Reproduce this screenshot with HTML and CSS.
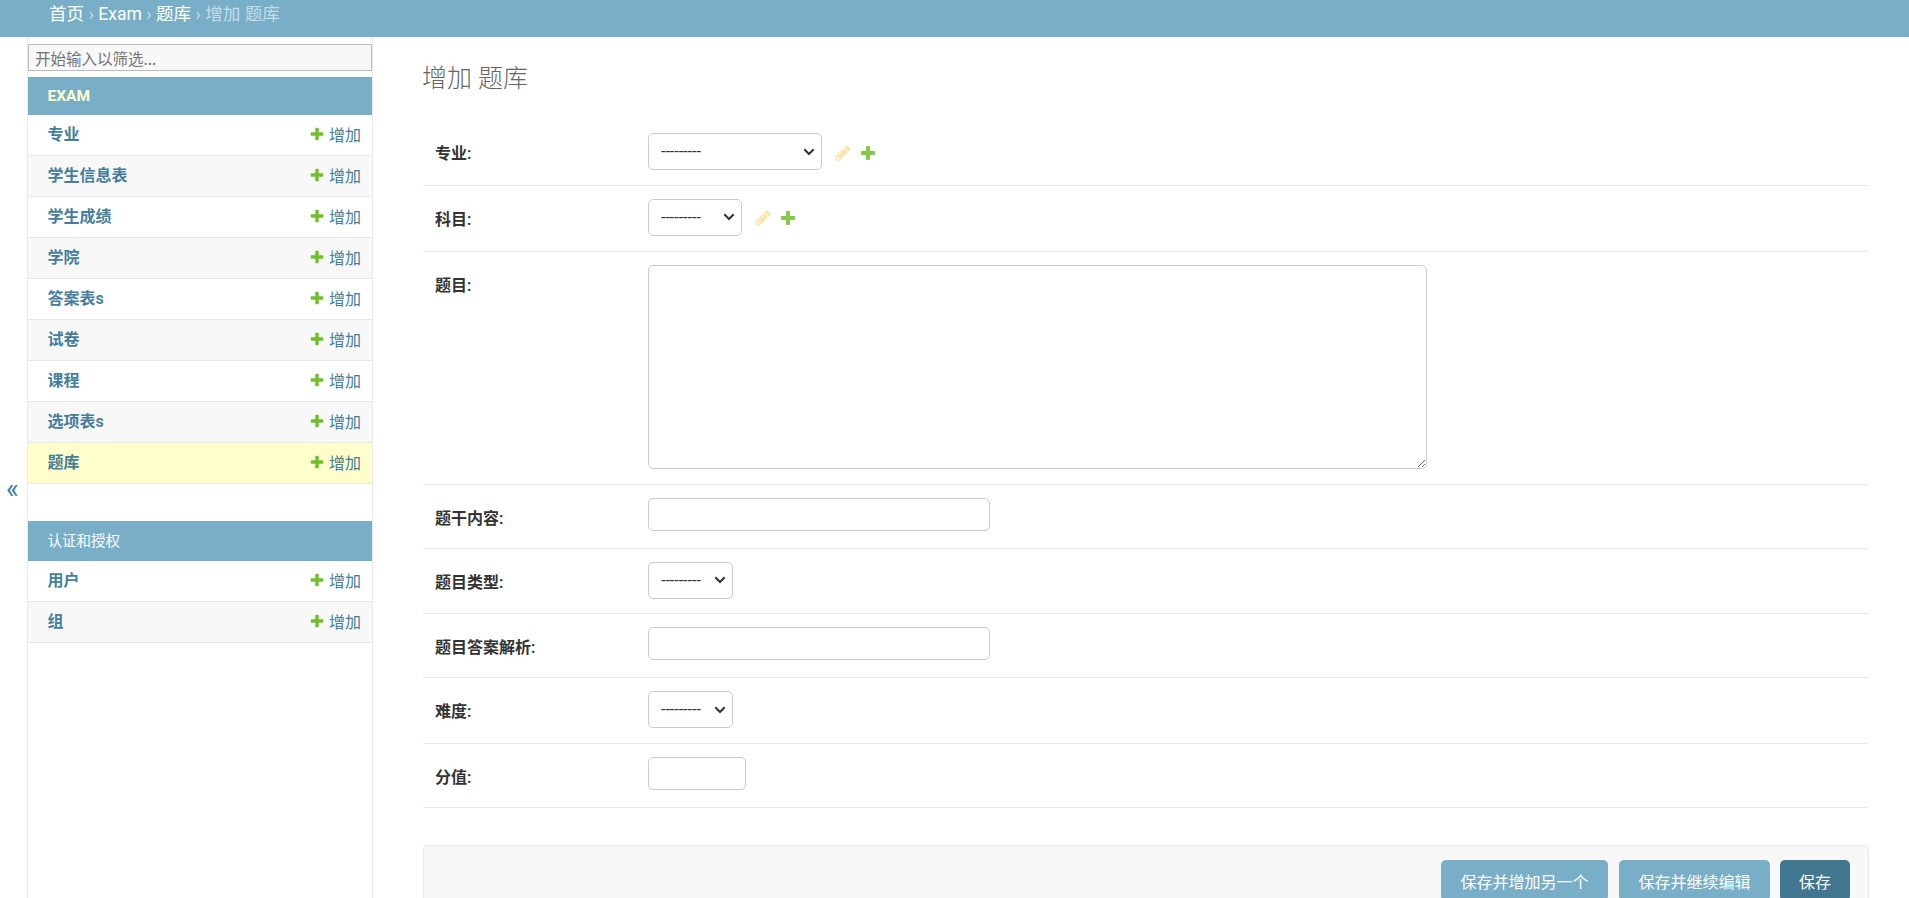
FILE: index.html
```html
<!DOCTYPE html>
<html lang="zh-CN">
<head>
<meta charset="utf-8">
<title>增加 题库</title>
<link rel="stylesheet" href="styles.css">
</head>
<body>
<svg class="sprites" width="0" height="0" aria-hidden="true">
  <symbol id="plus" viewBox="0 0 1792 1792"><path d="M1600 796v192q0 40-28 68t-68 28h-416v416q0 40-28 68t-68 28h-192q-40 0-68-28t-28-68v-416h-416q-40 0-68-28t-28-68v-192q0-40 28-68t68-28h416v-416q0-40 28-68t68-28h192q40 0 68 28t28 68v416h416q40 0 68 28t28 68z"/></symbol>
  <symbol id="pencil" viewBox="0 0 1792 1792"><path d="M491 1536l91-91-235-235-91 91v107h128v128h107zm523-928q0-22-22-22-10 0-17 7l-542 542q-7 7-7 17 0 22 22 22 10 0 17-7l542-542q7-7 7-17zm-54-192l416 416-832 832h-416v-416zm683 96q0 53-37 91l-166 165-416-416 165-164q36-38 91-38 53 0 92 38l235 234q37 39 37 91z"/></symbol>
</svg>
<header class="crumbs"><a href="#">首页</a><span class="sep"> › </span><a href="#">Exam</a><span class="sep"> › </span><a href="#">题库</a><span class="sep"> › </span><span class="current">增加 题库</span></header>
<div class="shell">
  <div class="toggle-col"><button class="toggle" type="button">«</button></div>
  <nav class="sidebar">
    <input class="filter" type="text" placeholder="开始输入以筛选...">
    <section class="app">
      <h2 class="caption caption-strong">EXAM</h2>
      <div class="model"><a class="name" href="#">专业</a><a class="add" href="#"><svg class="plus-icon"><use href="#plus"/></svg>增加</a></div>
      <div class="model"><a class="name" href="#">学生信息表</a><a class="add" href="#"><svg class="plus-icon"><use href="#plus"/></svg>增加</a></div>
      <div class="model"><a class="name" href="#">学生成绩</a><a class="add" href="#"><svg class="plus-icon"><use href="#plus"/></svg>增加</a></div>
      <div class="model"><a class="name" href="#">学院</a><a class="add" href="#"><svg class="plus-icon"><use href="#plus"/></svg>增加</a></div>
      <div class="model"><a class="name" href="#">答案表s</a><a class="add" href="#"><svg class="plus-icon"><use href="#plus"/></svg>增加</a></div>
      <div class="model"><a class="name" href="#">试卷</a><a class="add" href="#"><svg class="plus-icon"><use href="#plus"/></svg>增加</a></div>
      <div class="model"><a class="name" href="#">课程</a><a class="add" href="#"><svg class="plus-icon"><use href="#plus"/></svg>增加</a></div>
      <div class="model"><a class="name" href="#">选项表s</a><a class="add" href="#"><svg class="plus-icon"><use href="#plus"/></svg>增加</a></div>
      <div class="model selected"><a class="name" href="#">题库</a><a class="add" href="#"><svg class="plus-icon"><use href="#plus"/></svg>增加</a></div>
    </section>
    <section class="app app-second">
      <h2 class="caption">认证和授权</h2>
      <div class="model"><a class="name" href="#">用户</a><a class="add" href="#"><svg class="plus-icon"><use href="#plus"/></svg>增加</a></div>
      <div class="model"><a class="name" href="#">组</a><a class="add" href="#"><svg class="plus-icon"><use href="#plus"/></svg>增加</a></div>
    </section>
  </nav>
  <main class="content">
    <h1 class="title">增加 题库</h1>
    <form class="form">
      <div class="row row-select">
        <label class="label">专业:</label>
        <select class="select select-wide"><option>---------</option></select>
        <span class="related"><svg class="rel-icon pencil-icon"><use href="#pencil"/></svg><svg class="rel-icon add-icon"><use href="#plus"/></svg></span>
      </div>
      <div class="row row-select">
        <label class="label">科目:</label>
        <select class="select select-mid"><option>---------</option></select>
        <span class="related"><svg class="rel-icon pencil-icon"><use href="#pencil"/></svg><svg class="rel-icon add-icon"><use href="#plus"/></svg></span>
      </div>
      <div class="row row-area">
        <label class="label">题目:</label>
        <textarea class="area"></textarea>
      </div>
      <div class="row row-input">
        <label class="label">题干内容:</label>
        <input class="input input-wide" type="text">
      </div>
      <div class="row row-select">
        <label class="label">题目类型:</label>
        <select class="select select-narrow"><option>---------</option></select>
      </div>
      <div class="row row-input">
        <label class="label">题目答案解析:</label>
        <input class="input input-wide" type="text">
      </div>
      <div class="row row-select">
        <label class="label">难度:</label>
        <select class="select select-narrow"><option>---------</option></select>
      </div>
      <div class="row row-input">
        <label class="label">分值:</label>
        <input class="input input-small" type="text">
      </div>
      <div class="submit-row">
        <button class="btn btn-a" type="button">保存并增加另一个</button>
        <button class="btn btn-b" type="button">保存并继续编辑</button>
        <button class="btn btn-default" type="button">保存</button>
      </div>
    </form>
  </main>
</div>
</body>
</html>
```

FILE: styles.css
```css
* { box-sizing: border-box; }
html, body { height: 100%; overflow: hidden; }
body {
  margin: 0;
  background: #fff;
  color: #333;
  font-family: Roboto, "Noto Sans CJK SC", sans-serif;
  font-size: 16px;
  display: flex;
  flex-direction: column;
}
a { text-decoration: none; }
.sprites { position: absolute; }

.crumbs {
  flex: none;
  height: 37px;
  padding: 0 49px;
  background: #79aec8;
  color: #c4dce8;
  font-size: 17.6px;
  line-height: 28px;
}
.crumbs a { color: #fff; }
.crumbs .sep { color: #c4dce8; }
.crumbs .current { color: #c4dce8; }

.shell { flex: 1; display: flex; min-height: 0; }
.toggle-col {
  flex: none;
  width: 27px;
  display: flex;
  align-items: center;
  padding-top: 42px;
}
.toggle {
  width: 27px;
  padding: 0 0 0 6px;
  border: 0;
  background: none;
  color: #447e9b;
  font: 27px/30px Roboto, "Noto Sans CJK SC", sans-serif;
  text-align: left;
}

.sidebar {
  flex: none;
  width: 346px;
  border-left: 1px solid #eaeaea;
  border-right: 1px solid #eaeaea;
  padding-top: 7px;
}
.filter {
  display: block;
  width: 100%;
  height: 27px;
  margin-bottom: 6px;
  padding: 0 6px;
  border: 1px solid #bbb;
  background: #f8f8f8;
  color: #333;
  font: 15.5px "Noto Sans CJK SC", sans-serif;
}
.filter::placeholder { color: #757575; opacity: 1; }

.caption {
  margin: 0;
  height: 38px;
  padding: 0 19.5px;
  background: #79aec8;
  color: #fff;
  font-size: 14.5px;
  font-weight: 400;
  line-height: 38px;
}
.caption-strong { color: #ffc; font-weight: 700; font-size: 15.5px; }
.app-second { margin-top: 37px; }
.app-second .caption { height: 40px; line-height: 41px; }

.model {
  display: flex;
  justify-content: space-between;
  align-items: center;
  height: 41px;
  padding: 0 11px 3px 19.5px;
  border-bottom: 1px solid #e8e8e8;
}
.model:nth-of-type(even) { background: #f8f8f8; }
.model.selected { background: #ffc; }
.name { color: #447e9b; font-weight: 600; margin-bottom: 1px; }
.add { color: #447e9b; display: flex; align-items: center; }
.plus-icon { width: 16px; height: 16px; margin-right: 4px; fill: #70bf2b; }

.content { flex: 1; min-width: 0; padding: 0 40px 0 50px; }
.title {
  margin: 0 0 0 -1px;
  height: 83px;
  padding-top: 24px;
  color: #666;
  font-size: 25px;
  font-weight: 300;
  line-height: 36px;
}
.row {
  display: flex;
  align-items: flex-start;
  border-bottom: 1px solid #e8e8e8;
}
.row-select { padding: 13px 0 14.8px; }
.row-input { padding: 13px 0 17px; }
.row-area { padding: 13px 0 15px; }
.label {
  flex: none;
  width: 225px;
  margin-top: 10px;
  padding-left: 12px;
  color: #333;
  font-size: 16px;
  font-weight: 600;
  line-height: 22px;
}
.select, .input, .area {
  border: 1px solid #ccc;
  border-radius: 5px;
  background: #fff;
  color: #333;
  font-family: Roboto, "Noto Sans CJK SC", sans-serif;
}
.select {
  height: 37px;
  padding: 0 24px 0 12px;
  font-size: 16px;
  appearance: none;
  background-image: url("data:image/svg+xml,%3Csvg xmlns='http://www.w3.org/2000/svg' viewBox='0 0 12 8'%3E%3Cpath d='M1.3 1.3 6 6l4.7-4.7' fill='none' stroke='%23333' stroke-width='2'/%3E%3C/svg%3E");
  background-repeat: no-repeat;
  background-size: 12px 8px;
  background-position: right 6px center;
}
.select-wide { width: 174px; }
.select-mid { width: 94px; }
.select-narrow { width: 85px; }
.input { display: block; height: 33px; }
.input-wide { width: 342px; }
.input-small { width: 98px; }
.area { display: block; width: 779px; height: 204px; }

.related { display: flex; align-items: center; height: 37px; margin-left: 12px; padding-top: 2px; gap: 7px; }
.rel-icon { width: 18px; height: 18px; }
.pencil-icon { fill: #efb80b; opacity: .35; }
.add-icon { fill: #70bf2b; opacity: .85; }

.submit-row {
  display: flex;
  justify-content: flex-end;
  margin-top: 37px;
  padding: 14px 18px 14px 0;
  border: 1px solid #eaeaea;
  border-radius: 4px;
  background: #f8f8f8;
}
.btn {
  height: 41px;
  padding: 0 19px;
  border: 0;
  border-radius: 5px;
  background: #79aec8;
  color: #fff;
  font: 16px "Noto Sans CJK SC", sans-serif;
}
.btn-a { margin-right: 11px; padding: 0 19.5px; }
.btn-b { margin-right: 10px; padding: 0 19.5px; }
.btn-default { background: #417690; }
```
